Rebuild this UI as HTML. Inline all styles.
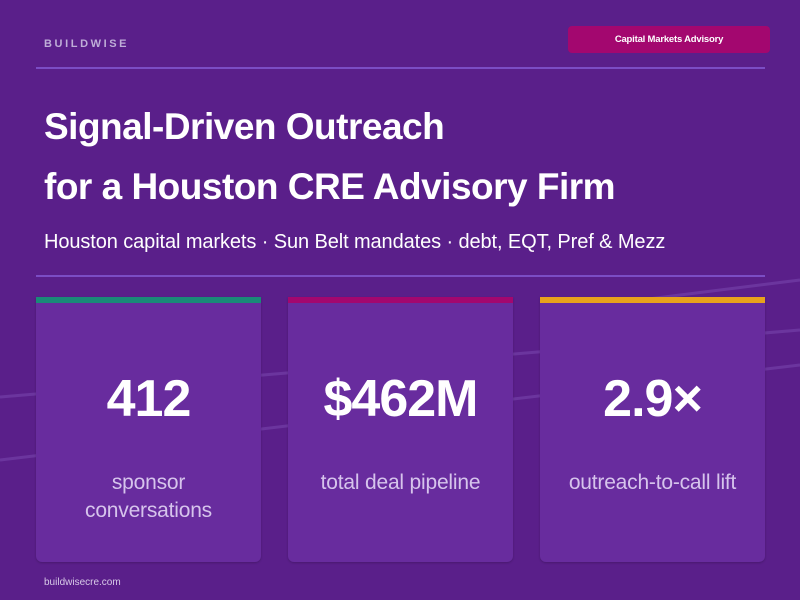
<!DOCTYPE html>
<html><head><meta charset="utf-8"><style>
*{margin:0;padding:0;box-sizing:border-box}
body{width:800px;height:600px;overflow:hidden;background:#5a1f8a;font-family:"Liberation Sans",sans-serif;position:relative;color:#fff}
.abs{position:absolute}
.brand{left:44px;top:38px;font-size:11px;font-weight:bold;letter-spacing:2.6px;color:#bfaed8}
.pill{left:568px;top:26px;width:202px;height:27px;background:#a3076f;border-radius:4px;font-size:9.5px;font-weight:bold;text-align:center;line-height:27px;letter-spacing:-0.2px}
.rule{left:36px;width:729px;height:2px;background:#7b4dc4}
h1{position:absolute;left:44px;font-size:37px;font-weight:bold;letter-spacing:-0.5px;white-space:nowrap}
.sub{left:44px;top:231px;font-size:20px;letter-spacing:-0.1px;white-space:nowrap}
.card{top:297px;width:225px;height:265px;background:#682c9e;border-radius:0 0 6px 6px;box-shadow:0 1px 2px rgba(0,0,0,.2)}
.bar{height:6px}
.num{position:absolute;left:0;right:0;top:72px;text-align:center;font-size:52px;font-weight:bold;letter-spacing:-1px}
.lab{position:absolute;left:0;right:0;top:172px;text-align:center;font-size:21px;line-height:28px;color:#d6c4ec;letter-spacing:-0.2px}
.foot{left:44px;top:577px;font-size:10px;color:#d8cbe8}
</style></head><body>
<svg class="abs" style="left:0;top:0" width="800" height="600">
<g stroke="#7a48b0" stroke-width="3" fill="none" opacity=".55">
<polyline points="0,397 800,330"/>
<polyline points="0,460 800,365"/>
<polyline points="560,310 800,280"/>
</g></svg>
<div class="abs brand">BUILDWISE</div>
<div class="abs pill">Capital Markets Advisory</div>
<div class="abs rule" style="top:67px"></div>
<h1 style="top:106px">Signal-Driven Outreach</h1>
<h1 style="top:166px">for a Houston CRE Advisory Firm</h1>
<div class="abs sub">Houston capital markets · Sun Belt mandates · debt, EQT, Pref &amp; Mezz</div>
<div class="abs rule" style="top:275px"></div>
<div class="abs card" style="left:36px"><div class="bar" style="background:#1a8a78"></div><div class="num">412</div><div class="lab">sponsor<br>conversations</div></div>
<div class="abs card" style="left:288px"><div class="bar" style="background:#a3076f"></div><div class="num">$462M</div><div class="lab">total deal pipeline</div></div>
<div class="abs card" style="left:540px"><div class="bar" style="background:#e8a21c"></div><div class="num">2.9×</div><div class="lab">outreach-to-call lift</div></div>
<div class="abs foot">buildwisecre.com</div>
</body></html>
